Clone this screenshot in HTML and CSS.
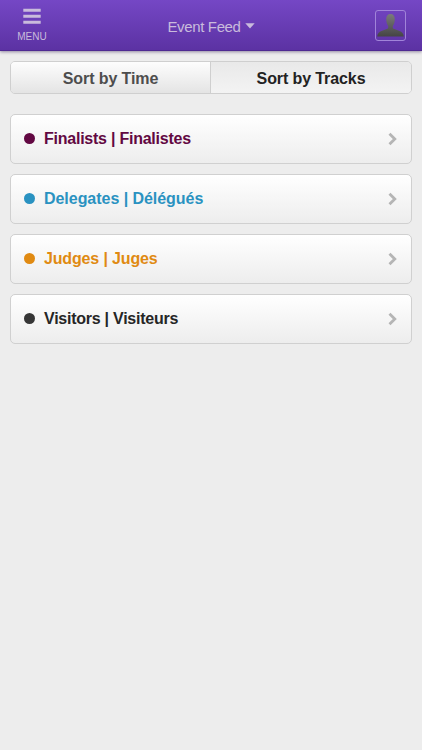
FILE: index.html
```html
<!DOCTYPE html>
<html lang="en">
<head>
<meta charset="utf-8">
<title>Event Feed</title>
<link rel="stylesheet" href="styles.css">
</head>
<body>
<header class="bar">
  <div class="menu">
    <svg class="menu-icon" width="18" height="16" viewBox="0 0 18 16"><path d="M.3 2.300h17.400M.3 8.300h17.400M.3 14.200h17.400" stroke="#c9bbdc" stroke-width="3"/></svg>
    <span class="menu-label">MENU</span>
  </div>
  <h1 class="title"><span class="title-text">Event Feed</span><svg class="caret" width="10" height="6" viewBox="0 0 10 6"><path d="M.3.3h9.400L5 5.600z" fill="#c9bbdc"/></svg></h1>
  <div class="avatar">
    <svg width="29" height="29" viewBox="0 0 29 29">
      <defs><linearGradient id="person" x1="0" y1="0" x2="0" y2="1"><stop offset="0" stop-color="#7b7b7b"/><stop offset="1" stop-color="#454545"/></linearGradient></defs>
      <path d="M14.500 3C11.700 3 10.200 5 10.200 8c0 3 .8 5.500 2 7v1.500c0 .8-.5 1.200-1.500 1.600l-5.200 2C3 21.100 1.500 22.500 1.200 25.500h26.600c-.3-3-1.800-4.400-4.300-5.400l-5.200-2c-1-.4-1.500-.8-1.500-1.600V15c1.200-1.500 2-4 2-7 0-3-1.500-5-4.300-5z" fill="url(#person)"/>
    </svg>
  </div>
</header>
<main class="content">
  <nav class="sort">
    <div class="tab"><span class="time">Sort by Time</span></div>
    <div class="tab active"><span class="tracks">Sort by Tracks</span></div>
  </nav>
  <div class="card finalists"><i class="dot"></i><span class="name">Finalists | Finalistes</span><svg class="chevron" width="9" height="14" viewBox="0 0 9 14"><path d="M1.500 1.700 6.800 7l-5.300 5.300" fill="none" stroke="#b5b5b5" stroke-width="2.800"/></svg></div>
  <div class="card delegates"><i class="dot"></i><span class="name">Delegates | Délégués</span><svg class="chevron" width="9" height="14" viewBox="0 0 9 14"><path d="M1.500 1.700 6.800 7l-5.300 5.300" fill="none" stroke="#b5b5b5" stroke-width="2.800"/></svg></div>
  <div class="card judges"><i class="dot"></i><span class="name">Judges | Juges</span><svg class="chevron" width="9" height="14" viewBox="0 0 9 14"><path d="M1.500 1.700 6.800 7l-5.300 5.300" fill="none" stroke="#b5b5b5" stroke-width="2.800"/></svg></div>
  <div class="card visitors"><i class="dot"></i><span class="name">Visitors | Visiteurs</span><svg class="chevron" width="9" height="14" viewBox="0 0 9 14"><path d="M1.500 1.700 6.800 7l-5.300 5.300" fill="none" stroke="#b5b5b5" stroke-width="2.800"/></svg></div>
</main>
</body>
</html>
```
FILE: styles.css
```css
* { box-sizing: border-box; }
body {
  margin: 0;
  min-height: 750px;
  background: #ededed;
  font-family: "Liberation Sans", Arial, sans-serif;
}
.bar {
  display: grid;
  grid-template-columns: 64px 1fr 64px;
  height: 51px;
  background: linear-gradient(#7547c5, #5c32a3);
  border-bottom: 1px solid #4f2a92;
  box-shadow: 0 1px 3px rgba(60, 40, 90, .5);
  color: #c9bbdc;
}
.menu {
  display: flex;
  flex-direction: column;
  align-items: center;
  padding-top: 8px;
}
.menu-icon { display: block; }
.menu-label {
  margin-top: 7px;
  font-size: 10px;
  line-height: 12px;
}
.title {
  display: flex;
  justify-content: center;
  align-items: center;
  gap: 4px;
  margin: 0;
  padding-top: 3px;
  font-size: 15px;
  font-weight: 400;
}
.title-text { letter-spacing: -.35px; }
.caret { margin-bottom: 2px; }
.avatar {
  width: 31px;
  height: 31px;
  margin: 10px 0 0 17px;
  border: 1px solid #a184d9;
  border-radius: 3px;
}
.avatar svg { display: block; }
.content { padding: 10px 10px 0; }
.sort {
  display: grid;
  grid-template-columns: 200px 1fr;
  height: 33px;
  margin-bottom: 20px;
  border: 1px solid #cfcfcf;
  border-radius: 5px;
  overflow: hidden;
}
.tab {
  display: flex;
  align-items: center;
  justify-content: center;
  padding-top: 2px;
  border-right: 1px solid #cfcfcf;
  background: linear-gradient(#fdfdfd, #e4e4e4);
  color: #4d4d4d;
  font-size: 16px;
  font-weight: 700;
  letter-spacing: -.1px;
}
.tab.active {
  border-right: 0;
  background: linear-gradient(#e9e9e9, #f3f3f3);
  color: #222;
}
.card {
  display: flex;
  align-items: center;
  height: 50px;
  margin-bottom: 10px;
  padding: 0 14px 0 13px;
  border: 1px solid #d0d0d0;
  border-radius: 5px;
  background: linear-gradient(#fff, #ededed);
  font-size: 16px;
  font-weight: 700;
}
.dot {
  width: 11px;
  height: 11px;
  margin: 0 9px 2px 0;
  border-radius: 50%;
  background: currentColor;
}
.chevron { margin-left: auto; }
.finalists { color: #620842; letter-spacing: -.24px; }
.delegates { color: #2a92c1; letter-spacing: -.04px; }
.judges { color: #e08a12; letter-spacing: -.15px; }
.visitors { color: #262626; letter-spacing: -.25px; }
.visitors .dot { background: #363636; }
```
